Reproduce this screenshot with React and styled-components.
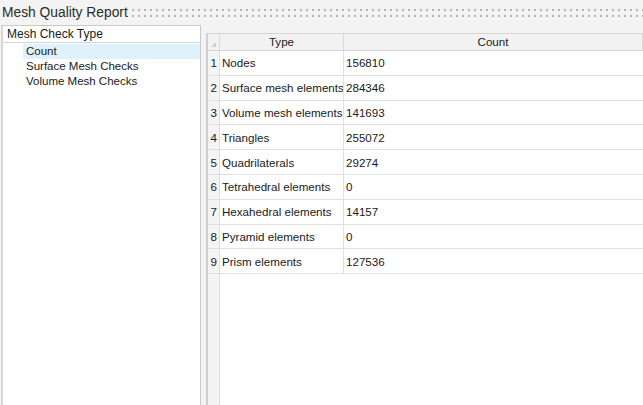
import React from 'react';
import styled, { createGlobalStyle } from 'styled-components';

const GlobalStyle = createGlobalStyle`
  html, body {
    margin: 0;
    padding: 0;
    background: #f3f3f3;
    font-family: "Liberation Sans", Arial, sans-serif;
    color: #1a1a1a;
    overflow: hidden;
  }
`;

const Page = styled.div`
  width: 643px;
  height: 405px;
  display: flex;
  flex-direction: column;
  overflow: hidden;
`;

const TitleBar = styled.div`
  height: 25px;
  display: flex;
  align-items: center;
  gap: 3px;
  padding-left: 2px;
`;

const Title = styled.div`
  font-size: 13.8px;
  color: #2b2b2b;
  white-space: nowrap;
  line-height: 25px;
`;

const Dots = styled.div`
  flex: 1;
  height: 12px;
  margin-top: 1px;
  background-image: radial-gradient(circle at 1px 1px, #b3b3b3 1px, transparent 1.3px);
  background-size: 6px 6px;
  background-position: 1px 2px;
`;

const Body = styled.div`
  flex: 1;
  display: flex;
  gap: 5px;
  padding-left: 1px;
  min-height: 0;
`;

const TreePanel = styled.div`
  width: 197px;
  flex-shrink: 0;
  background: #fff;
  border: 1px solid #c9c9c9;
  border-left: 2px solid #d6d6d6;
  border-bottom: none;
  display: flex;
  flex-direction: column;
`;

const TreeHeader = styled.div`
  height: 16px;
  line-height: 17px;
  border-bottom: 1px solid #d4d4d4;
  font-size: 12px;
  padding-left: 4px;
`;

const TreeList = styled.div`
  display: flex;
  flex-direction: column;
  padding-top: 1px;
`;

const TreeItem = styled.div`
  height: 15px;
  line-height: 15px;
  font-size: 11.5px;
  margin-left: 20px;
  padding-left: 3px;
  background: ${(props) => (props.selected ? '#dff1fa' : 'transparent')};
`;

const TablePanel = styled.div`
  flex: 1;
  margin-top: 8px;
  background: #fff;
  border-top: 1px solid #d4d4d4;
  border-left: 2px solid #d0d0d0;
  display: grid;
  grid-template-columns: 12px 124px 1fr;
  grid-template-rows: 17px repeat(9, 24.8px) 1fr;
  font-size: 11.6px;
  min-width: 0;
`;

const HeadCell = styled.div`
  background: #f2f2f2;
  border-right: 1px solid #dadada;
  border-bottom: 1px solid #d4d4d4;
  text-align: center;
  line-height: 16px;
  color: #222;
  position: relative;
`;

const Corner = styled(HeadCell)`
  &::after {
    content: '';
    position: absolute;
    right: 3px;
    bottom: 3px;
    width: 0;
    height: 0;
    border-left: 5px solid transparent;
    border-bottom: 5px solid #d0d0d0;
  }
`;

const RowNum = styled.div`
  background: #f4f4f4;
  border-right: 1px solid #dcdcdc;
  border-bottom: 1px solid #e0e0e0;
  padding-right: 2px;
  display: flex;
  align-items: center;
  justify-content: flex-end;
`;

const Cell = styled.div`
  border-right: ${(props) => (props.last ? 'none' : '1px solid #e0e0e0')};
  border-bottom: 1px solid #e0e0e0;
  padding-left: 2px;
  display: flex;
  align-items: center;
  white-space: nowrap;
  overflow: hidden;
`;

const FillNum = styled.div`
  background: #f4f4f4;
  border-right: 1px solid #dcdcdc;
`;

const rows = [
  ['Nodes', '156810'],
  ['Surface mesh elements', '284346'],
  ['Volume mesh elements', '141693'],
  ['Triangles', '255072'],
  ['Quadrilaterals', '29274'],
  ['Tetrahedral elements', '0'],
  ['Hexahedral elements', '14157'],
  ['Pyramid elements', '0'],
  ['Prism elements', '127536'],
];

const App = () => (
  <Page>
    <GlobalStyle />
    <TitleBar>
      <Title>Mesh Quality Report</Title>
      <Dots />
    </TitleBar>
    <Body>
      <TreePanel>
        <TreeHeader>Mesh Check Type</TreeHeader>
        <TreeList>
          <TreeItem selected>Count</TreeItem>
          <TreeItem>Surface Mesh Checks</TreeItem>
          <TreeItem>Volume Mesh Checks</TreeItem>
        </TreeList>
      </TreePanel>
      <TablePanel>
        <Corner />
        <HeadCell>Type</HeadCell>
        <HeadCell>Count</HeadCell>
        {rows.map(([type, count], i) => (
          <React.Fragment key={type}>
            <RowNum>{i + 1}</RowNum>
            <Cell>{type}</Cell>
            <Cell last>{count}</Cell>
          </React.Fragment>
        ))}
        <FillNum />
      </TablePanel>
    </Body>
  </Page>
);

export default App;
